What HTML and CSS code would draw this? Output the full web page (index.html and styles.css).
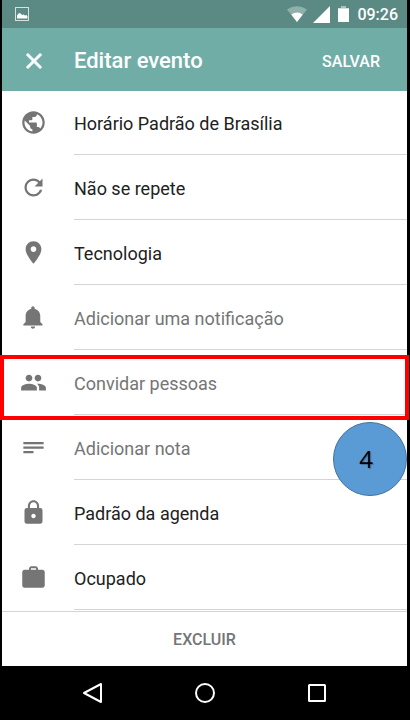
FILE: index.html
```html
<!DOCTYPE html>
<html lang="pt-BR">
<head>
<meta charset="utf-8">
<meta name="viewport" content="width=device-width, initial-scale=1">
<title>Editar evento</title>
<link rel="stylesheet" href="styles.css">
</head>
<body>
<div class="phone">
  <div class="status">
    <svg class="status-pic" viewBox="0 0 14 14"><rect x="0.5" y="0.5" width="13" height="13" fill="none" stroke="#d5e2df"/><path d="M2 11.500V8.500l1.500-2 1.500-.5 2 2 1.500-.5 1.500 1 1.500-.5 1 1.500v2z" fill="#fff"/></svg>
    <div class="status-right">
      <svg class="wifi" viewBox="0 0 20 17"><path d="M0 3.500Q10-3 20 3.500L10 16z" fill="#8fb1ac"/><path d="M4.300 8.500Q10 4.500 15.700 8.500L10 16z" fill="#fff"/></svg>
      <svg class="signal" viewBox="0 0 17 17"><path d="M17 0v17H0z" fill="#fff"/></svg>
      <svg class="battery" viewBox="0 0 11 17"><path d="M3 0h5v2h3v2H0V2h3z" fill="#a9c4c0"/><path d="M0 2.500h11V16H0z" fill="#fff"/></svg>
      <span class="clock">09:26</span>
    </div>
  </div>
  <header class="bar">
    <button class="close" aria-label="Fechar"><svg viewBox="0 0 24 24"><path d="M19 6.410 17.590 5 12 10.590 6.410 5 5 6.410 10.590 12 5 17.590 6.410 19 12 13.410 17.590 19 19 17.590 13.410 12z" fill="#fff" stroke="#fff" stroke-width=".9"/></svg></button>
    <h1>Editar evento</h1>
    <button class="save">SALVAR</button>
  </header>
  <main>
    <ul class="list">
      <li><button class="row"><svg class="icon" viewBox="0 0 24 24"><path d="M12 2C6.480 2 2 6.480 2 12s4.480 10 10 10 10-4.480 10-10S17.520 2 12 2zm-1 17.930c-3.950-.49-7-3.850-7-7.930 0-.62.080-1.210.21-1.790L9 15v1c0 1.100.9 2 2 2v1.930zm6.900-2.540c-.26-.81-1-1.390-1.900-1.390h-1v-3c0-.55-.45-1-1-1H8v-2h2c.55 0 1-.45 1-1V7h2c1.100 0 2-.9 2-2v-.41c2.930 1.190 5 4.060 5 7.410 0 2.080-.8 3.970-2.100 5.390z"/></svg><span class="label">Horário Padrão de Brasília</span></button></li>
      <li><button class="row"><svg class="icon" viewBox="0 0 24 24"><path d="M17.650 6.350C16.200 4.900 14.210 4 12 4c-4.420 0-7.990 3.580-7.990 8s3.570 8 7.990 8c3.730 0 6.840-2.550 7.730-6h-2.080c-.82 2.330-3.040 4-5.650 4-3.310 0-6-2.690-6-6s2.690-6 6-6c1.660 0 3.140.69 4.220 1.780L13 11h7V4l-2.350 2.350z"/></svg><span class="label">Não se repete</span></button></li>
      <li><button class="row"><svg class="icon" viewBox="0 0 24 24"><path d="M12 2C8.130 2 5 5.130 5 9c0 5.250 7 13 7 13s7-7.750 7-13c0-3.870-3.130-7-7-7zm0 9.500c-1.380 0-2.500-1.120-2.500-2.500s1.120-2.500 2.500-2.500 2.500 1.120 2.500 2.500-1.120 2.500-2.500 2.500z"/></svg><span class="label">Tecnologia</span></button></li>
      <li><button class="row hint"><svg class="icon" viewBox="0 0 24 24"><path d="M11.500 22c1.100 0 2-.9 2-2h-4c0 1.100.9 2 2 2zm6.500-6v-5.500c0-3.070-2.130-5.640-5-6.320V3.500c0-.83-.67-1.500-1.500-1.500S10 2.670 10 3.500v.68c-2.870.68-5 3.250-5 6.320V16l-2 2v1h17v-1l-2-2z"/></svg><span class="label">Adicionar uma notificação</span></button></li>
      <li class="marked"><button class="row hint"><svg class="icon" viewBox="0 0 24 24"><path d="M16 11c1.660 0 2.990-1.340 2.990-3S17.660 5 16 5c-1.660 0-3 1.340-3 3s1.340 3 3 3zm-8 0c1.660 0 2.990-1.340 2.990-3S9.660 5 8 5C6.340 5 5 6.340 5 8s1.340 3 3 3zm0 2c-2.330 0-7 1.170-7 3.500V19h14v-2.500c0-2.330-4.670-3.500-7-3.500zm8 0c-.29 0-.62.020-.97.050 1.160.84 1.970 1.970 1.970 3.450V19h6v-2.500c0-2.330-4.670-3.500-7-3.500z"/></svg><span class="label">Convidar pessoas</span></button></li>
      <li><button class="row hint"><svg class="icon" viewBox="0 0 24 24"><path d="M3 7h18v2H3zM3 11h18v2H3zM3 15h9v2H3z"/></svg><span class="label">Adicionar nota</span></button><span class="step">4</span></li>
      <li><button class="row"><svg class="icon" viewBox="0 0 24 24"><path d="M18 8h-1V6c0-2.760-2.240-5-5-5S7 3.240 7 6v2H6c-1.100 0-2 .9-2 2v10c0 1.100.9 2 2 2h12c1.100 0 2-.9 2-2V10c0-1.100-.9-2-2-2zm-6 9c-1.100 0-2-.9-2-2s.9-2 2-2 2 .9 2 2-.9 2-2 2zm3.100-9H8.900V6c0-1.710 1.390-3.100 3.100-3.100 1.710 0 3.100 1.390 3.100 3.100v2z"/></svg><span class="label">Padrão da agenda</span></button></li>
      <li><button class="row"><svg class="icon" viewBox="0 0 24 24"><path d="M20 5h-4V3.500L14.500 2h-5L8 3.500V5H4c-1.100 0-2 .9-2 2v12c0 1.100.9 2 2 2h16c1.100 0 2-.9 2-2V7c0-1.100-.9-2-2-2zM14.300 5H9.700V3.700h4.600z"/></svg><span class="label">Ocupado</span></button></li>
    </ul>
  </main>
  <footer class="foot"><button class="delete">EXCLUIR</button></footer>
  <nav class="nav">
    <button aria-label="Voltar"><svg viewBox="0 0 22 22"><path d="M19 2v18L2 11z"/></svg></button>
    <button aria-label="Início"><svg viewBox="0 0 22 22"><circle cx="11" cy="11" r="9"/></svg></button>
    <button aria-label="Recentes"><svg viewBox="0 0 22 22"><rect x="3" y="3" width="16" height="16" rx="0.5"/></svg></button>
  </nav>
</div>
</body>
</html>
```
FILE: styles.css
```css
* { box-sizing: border-box; }
body {
  margin: 0;
  background: #000;
  font-family: Roboto, "Liberation Sans", sans-serif;
}
button {
  border: 0;
  margin: 0;
  padding: 0;
  background: none;
  font: inherit;
  color: inherit;
  cursor: pointer;
}
svg { display: block; }
.phone {
  display: flex;
  flex-direction: column;
  min-height: 100vh;
  padding: 0 3px 0 2px;
}
.status {
  display: flex;
  align-items: center;
  justify-content: space-between;
  height: 28px;
  padding: 0 9px 0 13px;
  background: #5b8a85;
  color: #fff;
}
.status-pic { width: 14px; height: 14px; }
.status-right { display: flex; align-items: center; gap: 8px; }
.wifi { width: 20px; height: 17px; }
.signal { width: 17px; height: 17px; margin-left: -2px; }
.battery { width: 11px; height: 17px; }
.clock { font-size: 16px; line-height: 28px; font-weight: 500; padding-top: 2px; }
.bar {
  position: relative;
  z-index: 1;
  display: flex;
  align-items: center;
  height: 63px;
  padding: 3px 27px 0 19px;
  background: #71ada7;
  color: #fff;
}
.close { width: 53px; }
.close svg { width: 26px; height: 26px; }
h1 { flex: 1; margin: 0; font-size: 22px; line-height: 28px; font-weight: 500; }
.save { font-size: 16px; line-height: 20px; padding-top: 1px; font-weight: 500; }
main { flex: 1; background: #fff; }
.list { list-style: none; margin: -1px 0 0; padding: 0; }
.list li { position: relative; }
.row {
  display: flex;
  align-items: center;
  width: 100%;
  height: 65px;
  padding-left: 18px;
  color: #212121;
  text-align: left;
}
.icon { flex: none; width: 27px; height: 27px; margin-right: 27px; fill: #757575; }
.label {
  flex: 1;
  align-self: stretch;
  font-size: 18px;
  line-height: 67px;
  height: 65px;
  border-bottom: 1px solid #d4d4d4;
}
.hint { color: #757575; }
.marked::after {
  content: "";
  position: absolute;
  z-index: 2;
  inset: 5px -2px -5px;
  border: 4px solid #f00;
  pointer-events: none;
}
.step {
  position: absolute;
  z-index: 1;
  right: 0;
  top: 7px;
  width: 74px;
  height: 74px;
  padding-right: 8px;
  border: 1px solid #41719c;
  border-radius: 50%;
  background: #5b9bd5;
  color: #000;
  font: 500 24px/72px "Open Sans", sans-serif;
  text-align: center;
  text-shadow: 1px 1px 1px #0004;
}
.foot {
  display: flex;
  height: 55px;
  border-top: 1px solid #d4d4d4;
  background: #fff;
  color: #757575;
}
.delete { flex: 1; font-size: 16px; font-weight: 500; }
.nav {
  display: flex;
  align-items: center;
  justify-content: center;
  gap: 90px;
  height: 54px;
}
.nav svg { width: 22px; height: 22px; fill: none; stroke: #fff; stroke-width: 2; stroke-linejoin: round; }
```
